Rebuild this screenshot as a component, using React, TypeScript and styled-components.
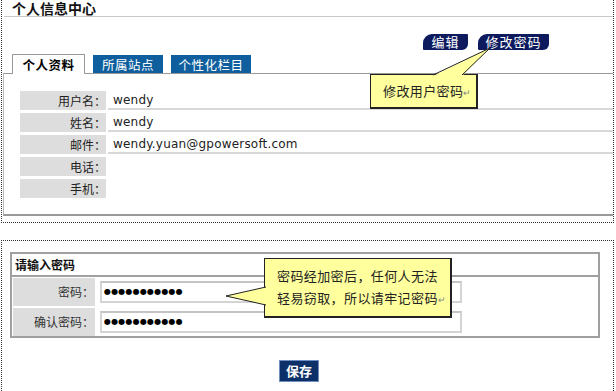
import React from "react";
import styled, { createGlobalStyle } from "styled-components";

const Global = createGlobalStyle`
  html, body { margin: 0; padding: 0; background: #fff; }
  body { font-family: "Noto Sans CJK SC", "DejaVu Sans", sans-serif; font-size: 12px; color: #222; }
`;

const Page = styled.div`
  width: 616px;
  height: 391px;
  overflow: hidden;
  padding-left: 1px;
  box-sizing: border-box;
`;

const Panel = styled.section<{ $top?: boolean }>`
  position: relative;
  width: 613px;
  box-sizing: border-box;
  border: 1px dotted #333;
  border-top: ${(p) => (p.$top ? "none" : "1px dotted #333")};
  margin-top: ${(p) => (p.$top ? "0" : "17px")};
  padding: ${(p) => (p.$top ? "0 0 6px 0" : "11px 0 30px 0")};
`;

const PanelTitle = styled.h1`
  margin: 0 0 0 2px;
  padding: 1px 0 0 8px;
  height: 15px;
  line-height: 15px;
  font-size: 14px;
  font-weight: bold;
  color: #111;
  border-bottom: 1px solid #c8c8c8;
`;

const ActionBar = styled.div`
  display: flex;
  justify-content: flex-end;
  gap: 10px;
  padding: 17px 64px 4px 0;
`;

const NavButton = styled.button<{ $w: number }>`
  width: ${(p) => p.$w}px;
  height: 16px;
  padding: 0;
  border: none;
  border-radius: 9px 1px 6px 1px;
  background: #0d1b5e;
  color: #fff;
  font-family: "Noto Sans CJK SC", sans-serif;
  font-size: 13px;
  line-height: 16px;
  letter-spacing: 1px;
`;

const TabStrip = styled.div`
  display: flex;
  align-items: flex-end;
  gap: 8px;
  padding-left: 10px;
  height: 19px;
`;

const Tab = styled.div<{ $active?: boolean; $w: number }>`
  width: ${(p) => p.$w}px;
  box-sizing: border-box;
  height: ${(p) => (p.$active ? "20px" : "18px")};
  margin-bottom: ${(p) => (p.$active ? "-1px" : "0")};
  position: relative;
  z-index: ${(p) => (p.$active ? 2 : 1)};
  display: flex;
  align-items: center;
  justify-content: center;
  background: ${(p) => (p.$active ? "#fff" : "#0f5f9e")};
  color: ${(p) => (p.$active ? "#000" : "#fff")};
  border: ${(p) => (p.$active ? "1px solid #999" : "none")};
  border-bottom: none;
  font-weight: ${(p) => (p.$active ? "bold" : "normal")};
  font-size: 12.5px;
  letter-spacing: 0.5px;
`;

const TabBody = styled.div`
  margin-left: 1px;
  border-top: 1px solid #999;
  border-left: 1px solid #bbb;
  border-bottom: 2px solid #999;
  padding: 17px 0 16px 16px;
  display: flex;
  flex-direction: column;
  gap: 3px;
`;

const InfoRow = styled.div`
  display: flex;
  gap: 2px;
  height: 19px;
`;

const InfoLabel = styled.div`
  width: 86px;
  flex: none;
  background: #dddddd;
  text-align: right;
  line-height: 19px;
  font-size: 12px;
  color: #222;
`;

const InfoValue = styled.div<{ $line?: boolean }>`
  flex: 1;
  box-sizing: border-box;
  padding-left: 5px;
  border-bottom: ${(p) => (p.$line ? "2px solid #d8d8d8" : "none")};
  font-family: "DejaVu Sans", Verdana, sans-serif;
  font-size: 12px;
  letter-spacing: 0.2px;
  line-height: 18px;
  color: #222;
`;

const Callout = styled.div<{ $x: number; $y: number; $w: number; $h: number }>`
  position: absolute;
  left: ${(p) => p.$x}px;
  top: ${(p) => p.$y}px;
  width: ${(p) => p.$w}px;
  height: ${(p) => p.$h}px;
  box-sizing: border-box;
  background: #ffff9d;
  border: 1px solid #222;
  border-right-width: 2px;
  border-bottom-width: 2px;
  font-family: "Noto Sans CJK SC", sans-serif;
  font-size: 13px;
  color: #222;
  z-index: 5;
`;

const CalloutText = styled.div<{ $pl: number; $pt: number }>`
  padding: ${(p) => p.$pt}px 0 0 ${(p) => p.$pl}px;
  line-height: 22px;
  letter-spacing: 0.4px;
  white-space: nowrap;
`;

const Mark = styled.span`
  font-size: 9px;
  color: #888;
  letter-spacing: 0;
`;

const Pointer = styled.svg<{ $x: number; $y: number }>`
  position: absolute;
  left: ${(p) => p.$x}px;
  top: ${(p) => p.$y}px;
  z-index: 6;
  overflow: visible;
`;

const FormBox = styled.div`
  margin-left: 8px;
  width: 590px;
  box-sizing: border-box;
  border: 2px solid #a0a0a0;
`;

const FormTitle = styled.div`
  height: 21px;
  line-height: 21px;
  padding-left: 3px;
  font-weight: bold;
  font-size: 12px;
  color: #111;
  border-bottom: 2px solid #a0a0a0;
`;

const FormRows = styled.div`
  padding: 1px 0 0 1px;
  display: flex;
  flex-direction: column;
  gap: 2px;
`;

const FormRow = styled.div`
  display: flex;
  align-items: center;
  height: 28px;
  gap: 5px;
`;

const FormLabel = styled.div`
  width: 82px;
  height: 100%;
  background: #dddddd;
  text-align: right;
  line-height: 28px;
  font-size: 12px;
  color: #333;
  box-sizing: border-box;
  padding-right: 1px;
`;

const PasswordField = styled.div`
  width: 362px;
  height: 22px;
  box-sizing: border-box;
  border: 2px solid #d4d4d4;
  border-top-color: #c4c4c4;
  padding-left: 2px;
  font-family: "DejaVu Sans", sans-serif;
  font-size: 8px;
  line-height: 18px;
  color: #000;
  letter-spacing: 0.2px;
`;

const Footer = styled.div`
  padding: 22px 0 0 277px;
`;

const SaveButton = styled.button`
  width: 40px;
  height: 22px;
  padding: 0;
  background: #0d3068;
  border: 1px solid #6e8fbf;
  color: #fff;
  font-family: "Noto Sans CJK SC", sans-serif;
  font-weight: bold;
  font-size: 13px;
  line-height: 18px;
`;

const profile = [
  { label: "用户名：", value: "wendy", line: true },
  { label: "姓名：", value: "wendy", line: true },
  { label: "邮件：", value: "wendy.yuan@gpowersoft.com", line: true },
  { label: "电话：", value: "", line: false },
  { label: "手机：", value: "", line: false },
];

const dots = "●●●●●●●●●●●";

export default function App() {
  return (
    <Page>
      <Global />
      <Panel $top>
        <PanelTitle>个人信息中心</PanelTitle>
        <ActionBar>
          <NavButton $w={45}>编辑</NavButton>
          <NavButton $w={71}>修改密码</NavButton>
        </ActionBar>
        <TabStrip>
          <Tab $active $w={73}>个人资料</Tab>
          <Tab $w={70}>所属站点</Tab>
          <Tab $w={80}>个性化栏目</Tab>
        </TabStrip>
        <TabBody>
          {profile.map((r) => (
            <InfoRow key={r.label}>
              <InfoLabel>{r.label}</InfoLabel>
              <InfoValue $line={r.line}>{r.value}</InfoValue>
            </InfoRow>
          ))}
        </TabBody>
        <Callout $x={368} $y={74} $w={108} $h={35}>
          <CalloutText $pl={12} $pt={5}>
            修改用户密码<Mark>↵</Mark>
          </CalloutText>
        </Callout>
        <Pointer $x={426} $y={44} width={70} height={34}>
          <polygon points="5,32 34,32 62,4" fill="#ffff9d" />
          <polyline points="5,31 62,4 34,31" fill="none" stroke="#222" strokeWidth={1} />
        </Pointer>
      </Panel>

      <Panel>
        <FormBox>
          <FormTitle>请输入密码</FormTitle>
          <FormRows>
            <FormRow>
              <FormLabel>密码：</FormLabel>
              <PasswordField>{dots}</PasswordField>
            </FormRow>
            <FormRow>
              <FormLabel>确认密码：</FormLabel>
              <PasswordField>{dots}</PasswordField>
            </FormRow>
          </FormRows>
        </FormBox>
        <Footer>
          <SaveButton>保存</SaveButton>
        </Footer>
        <Callout $x={262} $y={17} $w={188} $h={60}>
          <CalloutText $pl={12} $pt={6}>
            密码经加密后，任何人无法
            <br />
            轻易窃取，所以请牢记密码<Mark>↵</Mark>
          </CalloutText>
        </Callout>
        <Pointer $x={220} $y={42} width={48} height={26}>
          <polygon points="4,13 45,4 45,22" fill="#ffff9d" />
          <polyline points="44,4 4,13 44,22" fill="none" stroke="#222" strokeWidth={1} />
        </Pointer>
      </Panel>
    </Page>
  );
}
